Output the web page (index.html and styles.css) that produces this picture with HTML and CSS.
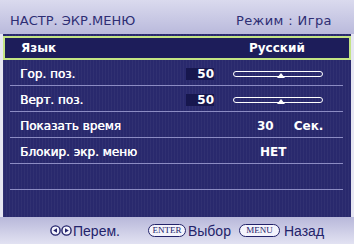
FILE: index.html
```html
<!DOCTYPE html>
<html>

<head lang="ru">
    <meta charset="UTF-8">
    <title>OSD</title>
    <link rel="stylesheet" href="styles.css">
</head>

<body>
    <div class="osd">
        <div class="osd-head">
            <span class="osd-title">НАСТР. ЭКР.МЕНЮ</span>
            <span class="osd-mode">Режим : Игра</span>
        </div>

        <div class="osd-body">
            <div class="row row-sel">
                <span class="label">Язык</span>
                <span class="val val-lang">Русский</span>
            </div>
            <div class="row">
                <span class="label">Гор. поз.</span>
                <span class="num">50</span>
                <span class="slider"><i class="thumb"></i></span>
            </div>
            <div class="row">
                <span class="label">Верт. поз.</span>
                <span class="num">50</span>
                <span class="slider"><i class="thumb"></i></span>
            </div>
            <div class="row">
                <span class="label">Показать время</span>
                <span class="val val-time">30</span>
                <span class="val val-unit">Сек.</span>
            </div>
            <div class="row">
                <span class="label">Блокир. экр. меню</span>
                <span class="val val-lock">НЕТ</span>
            </div>
            <div class="row"></div>
        </div>

        <div class="osd-foot">
            <svg class="arrow" width="11" height="11" viewBox="0 0 11 11">
                <circle cx="5.5" cy="5.5" r="4.6" fill="#f4f4fc" stroke="#23236a" stroke-width="1.4" />
                <polygon points="3.2,5.5 7,3.2 7,7.8" fill="#23236a" />
            </svg>
            <svg class="arrow" width="11" height="11" viewBox="0 0 11 11">
                <circle cx="5.5" cy="5.5" r="4.6" fill="#f4f4fc" stroke="#23236a" stroke-width="1.4" />
                <polygon points="7.8,5.5 4,3.2 4,7.8" fill="#23236a" />
            </svg>
            <span class="foot-text">Перем.</span>
            <span class="key key-enter">ENTER</span>
            <span class="foot-text">Выбор</span>
            <span class="key key-menu">MENU</span>
            <span class="foot-text">Назад</span>
        </div>
    </div>
</body>

</html>
```

FILE: styles.css
```css
html,
body {
    margin: 0px;
    padding: 0px;
}

body {
    width: 354px;
    height: 244px;
    background: #e6e6f2;
    font-family: "DejaVu Sans", Verdana, sans-serif;
}

.osd {
    display: flex;
    flex-direction: column;
    width: 354px;
    height: 244px;
}

.osd-head {
    display: flex;
    justify-content: space-between;
    align-items: center;
    height: 34px;
    padding: 6px 22px 0px 10px;
    box-sizing: border-box;
    background: linear-gradient(#dadaee, #babadc);
    color: #2e2e74;
    font-size: 13px;
}

.osd-mode {
    letter-spacing: 0.4px;
}

.osd-body {
    height: 183px;
    margin: 0px 3px;
    padding-top: 2px;
    box-sizing: border-box;
    background-color: #29296d;
    background-image: repeating-linear-gradient(90deg, rgba(255, 255, 255, .035) 0px, rgba(255, 255, 255, .035) 1px, transparent 1px, transparent 3px);
}

.row {
    display: flex;
    align-items: center;
    height: 26px;
    margin: 0px 8px 0px 7px;
    padding-top: 2px;
    border-bottom: 1px solid #8c8cc4;
    box-sizing: border-box;
    color: #ffffff;
    font-size: 12px;
}

.row-sel {
    height: 24px;
    margin: 0px;
    padding-top: 0px;
    border: 2px solid #c4e484;
    background: #1d1d5a;
    font-weight: bold;
}

.label {
    width: 176px;
    padding-left: 10px;
    box-sizing: border-box;
    text-shadow: 0.4px 0px 0px #ffffff;
}

.row-sel .label {
    width: 181px;
    padding-left: 16px;
    text-shadow: none;
}

.val {
    font-weight: bold;
}

.val-lang {
    padding-left: 63px;
}

.val-time {
    padding-left: 71px;
}

.val-unit {
    padding-left: 20px;
}

.val-lock {
    padding-left: 74px;
}

.num {
    width: 28px;
    height: 12px;
    line-height: 12px;
    background: #17174e;
    text-align: right;
    font-weight: bold;
}

.slider {
    position: relative;
    width: 88px;
    height: 4px;
    margin-left: 19px;
    border: 1.5px solid #ffffff;
    border-radius: 4px;
}

.thumb {
    position: absolute;
    left: 43px;
    top: 1px;
    width: 0px;
    height: 0px;
    border-left: 4px solid transparent;
    border-right: 4px solid transparent;
    border-bottom: 5px solid #ffffff;
}

.osd-foot {
    display: flex;
    align-items: center;
    flex: 1;
    padding-left: 50px;
    background: linear-gradient(#b8b8da, #e2e2f2);
    color: #23236a;
    font-family: "Liberation Sans", Arial, sans-serif;
    font-size: 14px;
}

.arrow {
    display: block;
}

.foot-text {
    margin-left: 1px;
}

.key {
    width: 38px;
    height: 13px;
    line-height: 11px;
    box-sizing: border-box;
    border: 1.5px solid #23236a;
    border-radius: 7px;
    background: #f4f4fc;
    text-align: center;
    font-family: "Liberation Serif", serif;
    font-size: 9px;
}

.key-enter {
    margin: 0px 1px 0px 28px;
}

.key-menu {
    width: 41px;
    margin: 0px 3px 0px 8px;
}
```
